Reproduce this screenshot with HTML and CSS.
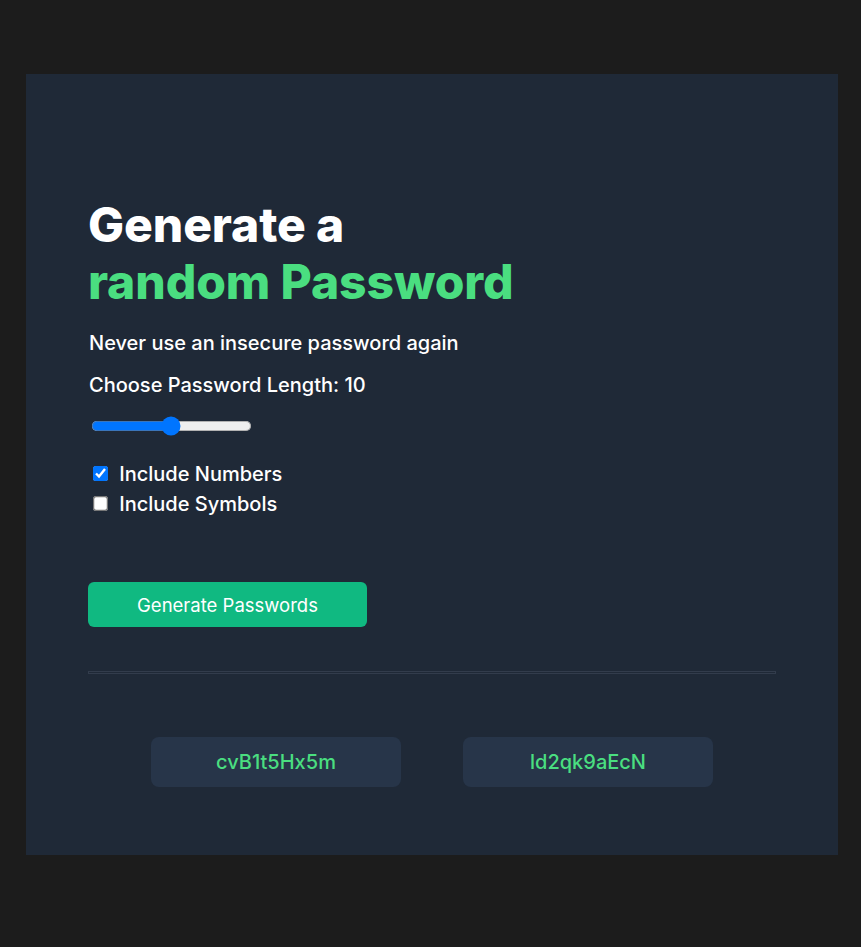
FILE: index.html
```html
<!DOCTYPE html>
<html>
<head>
<meta charset="utf-8">
<link rel="stylesheet" href="styles.css">
</head>
<body>
<main class="card">
  <h1 class="title">Generate a<br><span class="accent">random Password</span></h1>
  <p class="subtitle">Never use an insecure password again</p>
  <label class="length-label" for="len">Choose Password Length: 10</label>
  <input class="range" id="len" type="range" min="5" max="15" value="10">
  <div class="options">
    <label class="option"><input class="check" type="checkbox" checked> Include Numbers</label>
    <label class="option"><input class="check" type="checkbox"> Include Symbols</label>
  </div>
  <button class="generate">Generate Passwords</button>
  <hr class="divider">
  <div class="results">
    <div class="pw">cvB1t5Hx5m</div>
    <div class="pw">ld2qk9aEcN</div>
  </div>
</main>
</body>
</html>
```
FILE: styles.css
```css
html, body {
  margin: 0;
  padding: 0;
  background: #1c1c1c;
}
body {
  padding: 74px 23px 92px 26px;
  font-family: Inter, "Noto Sans", sans-serif;
  color: #ffffff;
}
.card {
  box-sizing: border-box;
  width: 812px;
  height: 781px;
  background: #1f2937;
  padding: 122px 62px 0 62px;
  display: flex;
  flex-direction: column;
  align-items: flex-start;
}
.title {
  margin: 0;
  font-size: 48px;
  line-height: 57px;
  font-weight: 800;
  letter-spacing: -0.1px;
}
.accent { color: #4ade80; }
.subtitle {
  margin: 20px 0 0 1px;
  font-size: 20px;
  line-height: 26px;
  font-weight: 500;
}
.length-label {
  margin: 16px 0 0 1px;
  font-size: 20px;
  line-height: 26px;
  font-weight: 500;
}
.range {
  zoom: 1.25;
  margin: 14.4px 0 0 2px;
  width: 129px;
}
.options {
  margin-top: 25px;
  display: flex;
  flex-direction: column;
  gap: 4px;
}
.option {
  font-size: 20px;
  line-height: 26px;
  font-weight: 500;
  display: flex;
  align-items: center;
}
.check {
  zoom: 1.25;
  margin: 0 8px 0 4px;
}
.generate {
  margin-top: 65px;
  width: 279px;
  height: 45px;
  border: none;
  border-radius: 6px;
  background: #10b981;
  color: #ffffff;
  font-family: Inter, sans-serif;
  font-size: 18.5px;
}
.divider {
  align-self: stretch;
  margin: 44px 0 0 0;
  height: 1px;
  border: 1px solid #323c4c;
  background: #1f2937;
}
.results {
  align-self: stretch;
  margin-top: 63px;
  display: flex;
  justify-content: center;
  gap: 62px;
}
.pw {
  width: 250px;
  height: 50px;
  border-radius: 8px;
  background: #273549;
  color: #4ade80;
  font-size: 20px;
  font-weight: 500;
  display: flex;
  align-items: center;
  justify-content: center;
}
```
